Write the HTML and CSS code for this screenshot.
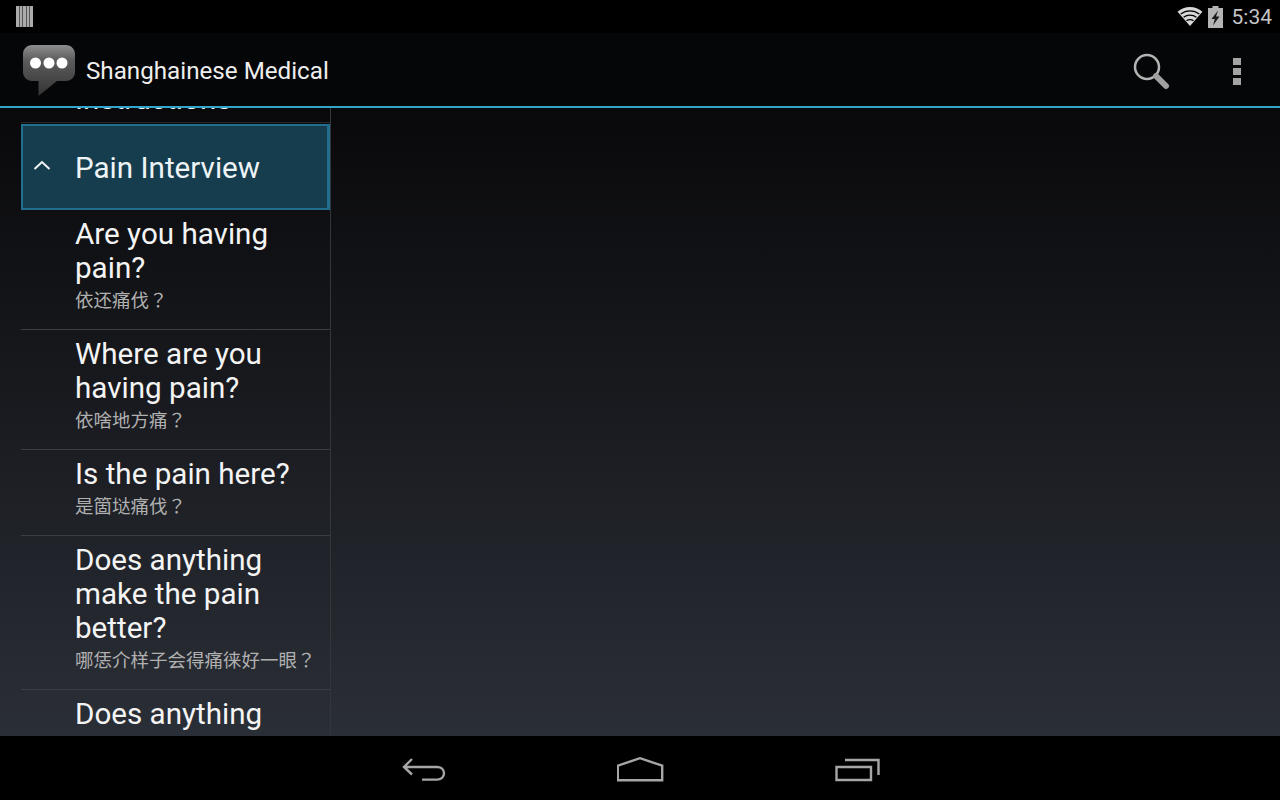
FILE: index.html
```html
<!DOCTYPE html>
<html lang="en">
<head>
  <meta charset="UTF-8">
  <title>Shanghainese Medical</title>
  <link rel="stylesheet" href="styles.css">
</head>
<body>

<!-- Status bar -->
<div class="status-bar">
  <svg class="bars" width="17" height="21" viewBox="0 0 17 21">
    <path d="M0 0h3v21H0zM3.500 0h3v21h-3zM7 0h3v21H7zM10.500 0h3v21h-3zM14 0h3v21h-3z" fill="#ababab"/>
  </svg>
  <div class="status-right">
    <svg class="wifi" width="26" height="21" viewBox="0 0 26 21">
      <path d="M13 20 0.500 5.700C4 2.700 8.300 1 13 1s9 1.700 12.500 4.700z" fill="#d8d8d8"/>
      <path d="M3.700 8C6.300 6 9.500 4.800 13 4.800s6.700 1.200 9.300 3.200M6.600 11.300c1.800-1.400 4-2.200 6.400-2.200s4.600.8 6.400 2.200M9.500 14.800c1-.8 2.200-1.200 3.500-1.200s2.500.4 3.500 1.200" fill="none" stroke="#000" stroke-width="1.300"/>
    </svg>
    <svg class="battery" width="15" height="22" viewBox="0 0 15 22">
      <path d="M4.500 0h6v2H15v20H0V2h4.500z" fill="#b4b4b4"/>
      <path d="M10 4.500 3.500 13h3.300L5 19.500 11.500 10.500H8z" fill="#1a1a1a"/>
    </svg>
    <span class="clock">5:34</span>
  </div>
</div>

<!-- Action bar -->
<div class="action-bar">
  <svg class="app-icon" width="54" height="54" viewBox="0 0 54 54">
    <defs>
      <linearGradient id="bubble" x1="0" y1="0" x2="0" y2="1">
        <stop offset="0" stop-color="#8e8e8e"/>
        <stop offset="0.3" stop-color="#5c5c5c"/>
        <stop offset="1" stop-color="#333"/>
      </linearGradient>
    </defs>
    <path d="M10 1h34c5 0 9 4 9 9v18c0 5-4 9-9 9H35L16.500 52V37H10c-5 0-9-4-9-9V10c0-5 4-9 9-9z" fill="url(#bubble)"/>
    <circle cx="13.500" cy="19" r="5.500" fill="#fff"/>
    <circle cx="27" cy="19" r="5.500" fill="#fff"/>
    <circle cx="40" cy="19" r="5.500" fill="#fff"/>
  </svg>
  <span class="app-title">Shanghainese Medical</span>
  <svg class="search" width="38" height="38" viewBox="0 0 38 38">
    <circle cx="15" cy="15" r="12" fill="none" stroke="#b4b4b4" stroke-width="2.500"/>
    <path d="M24 24l10 10" stroke="#a0a0a0" stroke-width="6" stroke-linecap="round"/>
  </svg>
  <div class="overflow">
    <span></span><span></span><span></span>
  </div>
</div>

<!-- Content -->
<div class="content">
  <div class="sidebar">
    <div class="list">
      <div class="row first">
        <p class="title">Instructions</p>
      </div>
      <div class="group">
        <svg class="chevron" width="18" height="12" viewBox="0 0 18 12">
          <path d="M1.500 10 9 3l7.500 7" fill="none" stroke="#f0f4f4" stroke-width="2"/>
        </svg>
        <span>Pain Interview</span>
      </div>
      <div class="row">
        <p class="title">Are you having pain?</p>
        <p class="sub">依还痛伐？</p>
      </div>
      <div class="row">
        <p class="title">Where are you having pain?</p>
        <p class="sub">依啥地方痛？</p>
      </div>
      <div class="row">
        <p class="title">Is the pain here?</p>
        <p class="sub">是箇垯痛伐？</p>
      </div>
      <div class="row">
        <p class="title">Does anything make the pain better?</p>
        <p class="sub">哪恁介样子会得痛徕好一眼？</p>
      </div>
      <div class="row">
        <p class="title">Does anything make the pain worse?</p>
      </div>
    </div>
  </div>
</div>

<!-- Navigation bar -->
<div class="nav-bar">
  <svg width="46" height="26" viewBox="0 0 46 26">
    <path d="M10 2 2 10l8 7.500M2 10h33c4 0 7 2.500 7 6.300s-3 6.300-7 6.300H20" fill="none" stroke="#a6a6a6" stroke-width="2.400"/>
  </svg>
  <svg width="48" height="26" viewBox="0 0 48 26">
    <path d="M0.800 23.300V8.700L23 1.200 45.200 8.700v14.600z" fill="none" stroke="#a6a6a6" stroke-width="2.400"/>
  </svg>
  <svg width="46" height="26" viewBox="0 0 46 26">
    <path d="M11 3h33.500v15" fill="none" stroke="#a6a6a6" stroke-width="2.400"/>
    <path d="M2.500 10h34.500v13H2.500z" fill="none" stroke="#a6a6a6" stroke-width="2.400"/>
  </svg>
</div>

</body>
</html>
```

FILE: styles.css
```css
html, body {
  height: 100%;
}

body {
  margin: 0;
  background: #000;
  color: #fff;
  font-family: Roboto, "Noto Sans CJK TC", sans-serif;
  overflow: hidden;
  display: flex;
  flex-direction: column;
}

.status-bar {
  height: 33px;
  background: #000;
  display: flex;
  align-items: center;
  justify-content: space-between;
  padding: 0 8px 0 16px;
}

.bars {
  display: block;
}

.status-right {
  display: flex;
  align-items: center;
  gap: 5px;
}

.clock {
  color: #c4c4c4;
  font-size: 21px;
  margin-left: 4px;
}

.action-bar {
  height: 73px;
  background: #050607;
  display: flex;
  align-items: center;
  padding-left: 22px;
  border-bottom: 2px solid #33a5cc;
}

.app-icon {
  flex: none;
  margin-top: 2px;
}

.app-title {
  font-size: 24.2px;
  color: #eee;
  margin: 3px 0 0 10px;
  flex: 1;
}

.search {
  flex: none;
  margin-top: 3px;
}

.overflow {
  width: 8px;
  display: flex;
  flex-direction: column;
  gap: 3px;
  margin: 3px 39px 0 63px;
}

.overflow span {
  height: 7px;
  background: #a4a4a4;
}

.content {
  height: 628px;
  background: linear-gradient(#09090b, #2a2e36);
  overflow: hidden;
}

.sidebar {
  width: 309px;
  height: 100%;
  margin-left: 21px;
  border-right: 1px solid #33373c;
  overflow: hidden;
}

.list {
  margin-top: -35px;
}

.row {
  padding: 7px 12px 16.5px 54px;
  border-bottom: 1px solid #3a3e43;
}

.row.first {
  padding: 8.5px 12px 14.5px 54px;
  height: 26px;
  border-bottom-color: #26282b;
}

.title {
  margin: 0;
  font-size: 29.6px;
  line-height: 34px;
  color: #f4f4f4;
}

.sub {
  margin: 3.5px 0 0;
  font-size: 18.5px;
  line-height: 24px;
  color: #b0b0b0;
}

.group {
  height: 82px;
  margin-top: 1px;
  background: #163d4e;
  border: 2px solid #216e8f;
  border-right-width: 3px;
  display: flex;
  align-items: center;
  font-size: 29.6px;
  color: #eef4f6;
}

.group span {
  margin-top: 2px;
}

.chevron {
  margin: 0 24px 5px 10px;
}

.nav-bar {
  flex: 1;
  background: #000;
  display: flex;
  align-items: center;
  justify-content: center;
  gap: 169px;
  padding: 4px 0 0 2px;
}
```
